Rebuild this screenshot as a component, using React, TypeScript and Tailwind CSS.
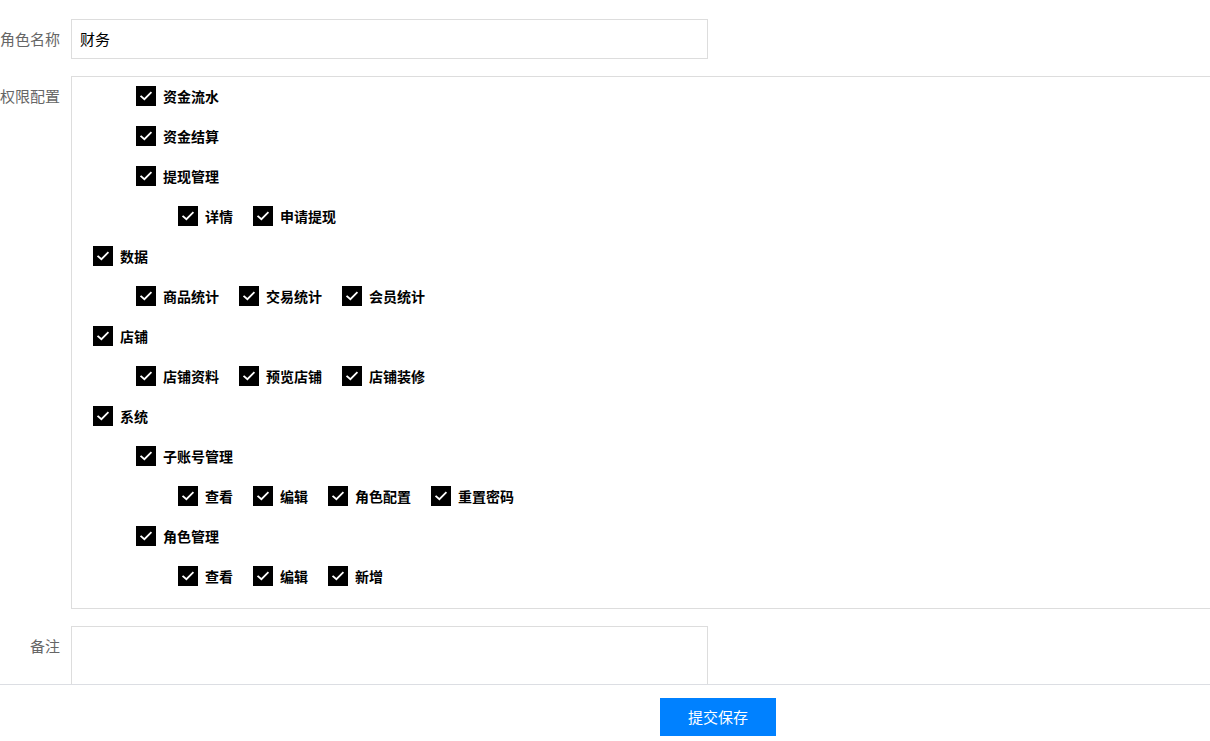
import React from "react";

// Permission rows: each row is drawn at its tree level, items side by side.
const tree: { level: number; items: string[] }[] = [
  { level: 2, items: ["资金流水"] },
  { level: 2, items: ["资金结算"] },
  { level: 2, items: ["提现管理"] },
  { level: 3, items: ["详情", "申请提现"] },
  { level: 1, items: ["数据"] },
  { level: 2, items: ["商品统计", "交易统计", "会员统计"] },
  { level: 1, items: ["店铺"] },
  { level: 2, items: ["店铺资料", "预览店铺", "店铺装修"] },
  { level: 1, items: ["系统"] },
  { level: 2, items: ["子账号管理"] },
  { level: 3, items: ["查看", "编辑", "角色配置", "重置密码"] },
  { level: 2, items: ["角色管理"] },
  { level: 3, items: ["查看", "编辑", "新增"] },
];

const indent: Record<number, string> = {
  1: "pl-[21px]",
  2: "pl-[64px]",
  3: "pl-[106px]",
};

function CheckBox() {
  return (
    <span className="flex h-5 w-5 shrink-0 items-center justify-center bg-black">
      <svg width="20" height="20" viewBox="0 0 20 20" fill="none">
        <path
          d="M5.2 10.4 L8.4 13.2 L14.8 6.8"
          stroke="#fff"
          strokeWidth="1.8"
          strokeLinecap="square"
          strokeLinejoin="miter"
        />
      </svg>
    </span>
  );
}

function CheckItem({ label }: { label: string }) {
  return (
    <label className="flex items-center gap-[7px]">
      <CheckBox />
      <span className="text-[14px] font-bold text-black">{label}</span>
    </label>
  );
}

const font = {
  fontFamily: '"Noto Sans CJK SC", "Noto Sans", sans-serif',
};

export default function App() {
  return (
    <div
      className="relative h-[741px] w-[1210px] overflow-hidden bg-white"
      style={font}
    >
      <div className="pt-[19px]">
        {/* role name */}
        <div className="flex">
          <div className="mr-[11px] w-[60px] shrink-0 whitespace-nowrap text-right text-[15px] leading-10 text-[#666]">
            角色名称
          </div>
          <div className="flex h-10 w-[637px] items-center border border-[#dddddd] px-[8px] text-[15px] text-black">
            财务
          </div>
        </div>

        {/* permissions */}
        <div className="mt-[17px] flex">
          <div className="mr-[11px] w-[60px] shrink-0 whitespace-nowrap text-right text-[15px] leading-10 text-[#666]">
            权限配置
          </div>
          <div className="h-[533px] w-[1160px] shrink-0 border border-[#dddddd]">
            <div className="-mt-px">
              {tree.map((row, i) => (
                <div
                  key={i}
                  className={`flex h-10 items-center gap-5 ${indent[row.level]}`}
                >
                  {row.items.map((it) => (
                    <CheckItem key={it} label={it} />
                  ))}
                </div>
              ))}
            </div>
          </div>
        </div>

        {/* remarks */}
        <div className="mt-[17px] flex">
          <div className="mr-[11px] w-[60px] shrink-0 whitespace-nowrap text-right text-[15px] leading-10 text-[#666]">
            备注
          </div>
          <div className="h-[100px] w-[637px] border border-[#dddddd]" />
        </div>
      </div>

      {/* footer bar */}
      <div className="absolute bottom-0 left-0 right-0 h-[57px] border-t border-[#dcdee3] bg-white pl-[660px] pt-[13px]">
        <button className="flex h-[38px] w-[116px] items-center justify-center bg-[#0081ff] text-[15px] text-white">
          提交保存
        </button>
      </div>
    </div>
  );
}
